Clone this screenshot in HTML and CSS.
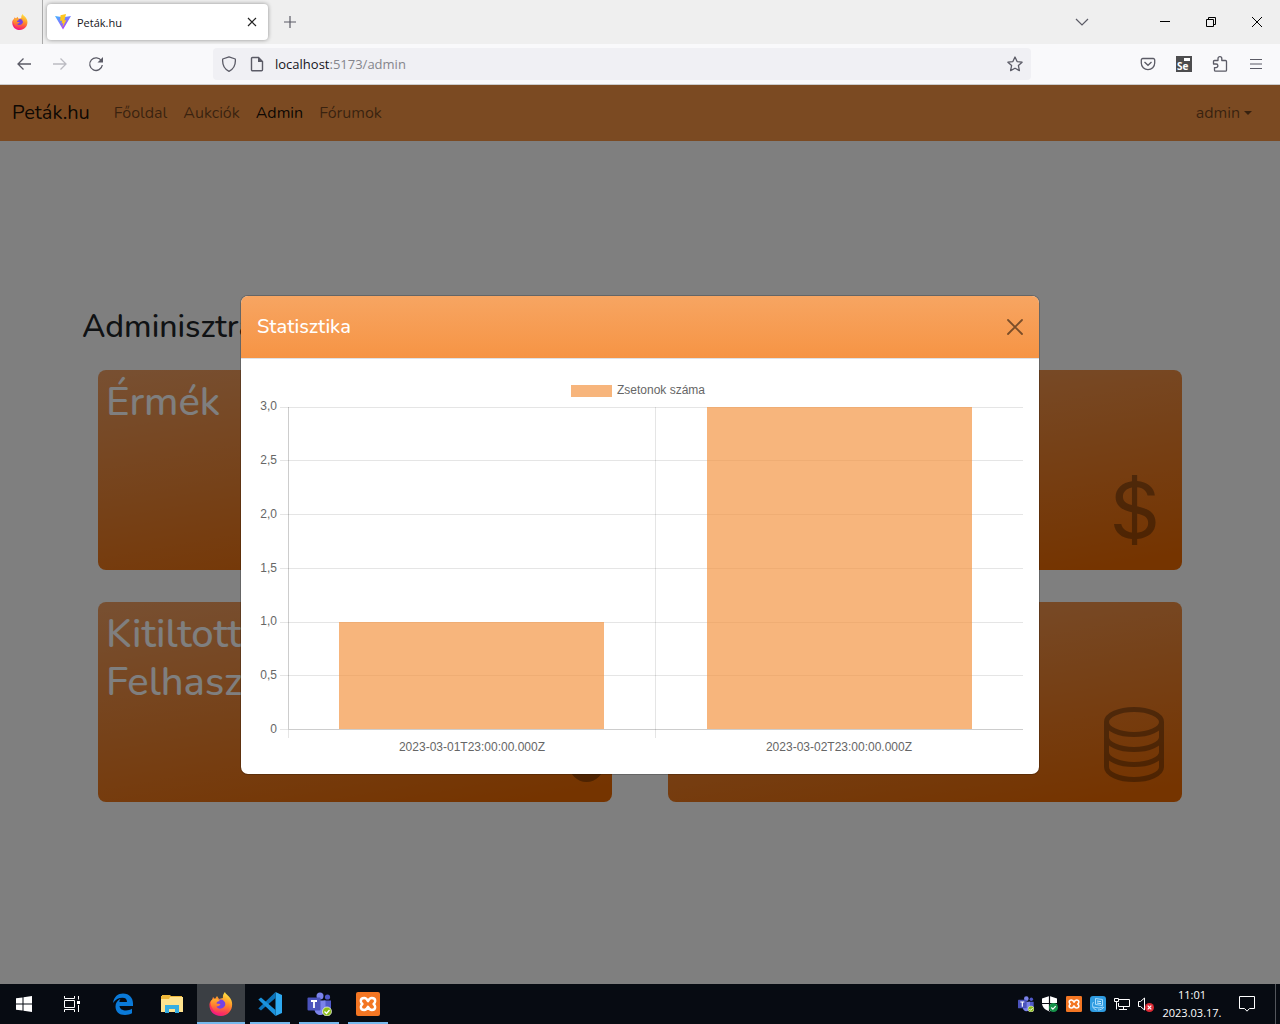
FILE: index.html
```html
<!DOCTYPE html>
<html lang="hu">
<head>
<meta charset="utf-8">
<meta name="viewport" content="width=device-width, initial-scale=1">
<title>Peták.hu</title>
<link rel="stylesheet" href="styles.css">
</head>
<body>
<svg class="defs" aria-hidden="true">
  <defs>
    <linearGradient id="ff-fire" x1="0.8" y1="0" x2="0.3" y2="1">
      <stop offset="0" stop-color="#fff04a"/><stop offset="0.35" stop-color="#ffa02a"/><stop offset="0.7" stop-color="#ff4242"/><stop offset="1" stop-color="#f0148c"/>
    </linearGradient>
    <linearGradient id="ff-swirl" x1="0.5" y1="0" x2="0.4" y2="1">
      <stop offset="0" stop-color="#ffb52e"/><stop offset="0.5" stop-color="#ff7a30"/><stop offset="1" stop-color="#f8246e"/>
    </linearGradient>
    <linearGradient id="vite-body" x1="0" y1="0" x2="0.6" y2="1">
      <stop offset="0" stop-color="#41b8ff"/><stop offset="1" stop-color="#b43cff"/>
    </linearGradient>
    <symbol id="firefox" viewBox="0 0 24 24">
      <path d="M3 8l1-3 2 2 2-3 2 3 4-1c-.5-2 .5-4.500 2-6 .5 2.500 5 4 6.500 8.500C25 16 20 24 12 24S0 18.500 .5 12C.7 10 1.500 9 3 8z" fill="url(#ff-fire)"/>
      <circle cx="11.500" cy="12.500" r="5" fill="#7542e5"/>
      <path d="M2 9c2-3 6-3 9 0-2 .3-3.500 1-3.500 2.500 1.500.5 3 0 4 .8-1 1.700-2.500 2.400-4 2.200 1 2.500 5 3 7.500 .5s2-5-.5-6.500c5 0 7 5 5 9-3 6-12 6-15.500 0C2 14.500 1 11.500 2 9z" fill="url(#ff-swirl)"/>
    </symbol>
    <symbol id="teams" viewBox="0 0 24 24">
      <circle cx="12.500" cy="4" r="3.500" fill="#7b83eb"/><circle cx="20" cy="5" r="2.600" fill="#5059c9"/>
      <path d="M16 8.500h7.500V16c0 3-2 4.500-5 4.500z" fill="#5059c9"/>
      <path d="M7 8.500h11V17c0 4-2.500 6-5.500 6S7 20.500 7 17z" fill="#7b83eb"/>
      <rect y="5.500" width="13" height="13" rx="1" fill="#4b53bc"/>
      <path d="M3.500 9h6M6.500 9v7" stroke="#fff" stroke-width="1.800"/>
      <circle cx="19.500" cy="19.500" r="4.500" fill="#8cbd18" stroke="#fff" stroke-width=".7"/>
      <path d="M17 19.500l2 2 3-3.500" fill="none" stroke="#fff" stroke-width="1.300"/>
    </symbol>
    <symbol id="xampp" viewBox="0 0 24 24">
      <rect width="24" height="24" rx="2" fill="#f37623"/>
      <path d="M12 9.200C11 7 10 6 8.200 6 6 6 4.800 7.200 4.800 9S6 11.500 6.500 12c-.5.500-1.700 1.200-1.700 3s1.200 3 3.400 3c1.800 0 2.800-1 3.800-3.200 1 2.200 2 3.200 3.800 3.200 2.200 0 3.400-1.200 3.400-3s-1.200-2.500-1.700-3c.5-.5 1.700-1.200 1.700-3s-1.200-3-3.400-3C14 6 13 7 12 9.200z" fill="none" stroke="#fff" stroke-width="2.400" stroke-linejoin="round"/>
    </symbol>
  </defs>
</svg>

<header class="browser">
  <div class="tab-strip">
    <div class="firefox-view"><svg width="16" height="16"><use href="#firefox"/></svg></div>
    <div class="tab">
      <svg width="16" height="16" viewBox="0 0 16 16"><path d="M0 2l8 13.500L16 2 8 3.300z" fill="url(#vite-body)"/><path d="M11 0L5.500 1.200 5.200 7l2-.4L6.600 9.500l1.600-.4-.8 4.400 4-7.500-2 .4z" fill="#ffc71f"/></svg>
      <span class="tab-title">Peták.hu</span>
      <button class="icon-button" aria-label="Lap bezárása"><svg width="16" height="16" viewBox="0 0 16 16"><path d="M4 4l8 8M12 4l-8 8" stroke="#222" stroke-width="1.200"/></svg></button>
    </div>
    <button class="icon-button new-tab" aria-label="Új lap"><svg width="16" height="16" viewBox="0 0 16 16"><path d="M8 2v12M2 8h12" stroke="#5b5b66" stroke-width="1.200"/></svg></button>
    <button class="icon-button all-tabs" aria-label="Összes lap"><svg width="16" height="16" viewBox="0 0 16 16"><path d="M2 5l6 6 6-6" fill="none" stroke="#5b5b66" stroke-width="1.200"/></svg></button>
    <div class="window-controls">
      <button class="icon-button" aria-label="Kis méret"><svg width="12" height="12" viewBox="0 0 12 12"><path d="M1 5.500h10" stroke="#000"/></svg></button>
      <button class="icon-button" aria-label="Előző méret"><svg width="12" height="12" viewBox="0 0 12 12"><path d="M1.500 3.500h7v7h-7zM3.500 3.500v-2h7v7h-2" fill="none" stroke="#000"/></svg></button>
      <button class="icon-button" aria-label="Bezárás"><svg width="12" height="12" viewBox="0 0 12 12"><path d="M1 1l10 10M11 1L1 11" stroke="#000"/></svg></button>
    </div>
  </div>
  <div class="toolbar">
    <div class="toolbar-nav">
      <button class="icon-button" aria-label="Vissza"><svg width="16" height="16" viewBox="0 0 16 16"><path d="M15 8H2M7.500 2.500L2 8l5.500 5.500" fill="none" stroke="#5b5b66" stroke-width="1.300"/></svg></button>
      <button class="icon-button" aria-label="Előre" disabled><svg width="16" height="16" viewBox="0 0 16 16"><path d="M1 8h13M8.500 2.500L14 8l-5.500 5.500" fill="none" stroke="#bcbcc2" stroke-width="1.300"/></svg></button>
      <button class="icon-button" aria-label="Frissítés"><svg width="16" height="16" viewBox="0 0 16 16"><path d="M13.500 5A6.300 6.300 0 1 0 14.300 9" fill="none" stroke="#5b5b66" stroke-width="1.300"/><path d="M15 1v5.500H9.500z" fill="#5b5b66"/></svg></button>
    </div>
    <div class="address">
      <svg width="16" height="16" viewBox="0 0 16 16"><path d="M8 .8L14.300 3c.5 5.500-1.300 10-6.300 12.300C3 13 1.200 8.500 1.700 3z" fill="none" stroke="#5b5b66" stroke-width="1.300" stroke-linejoin="round"/></svg>
      <svg width="16" height="16" viewBox="0 0 16 16"><path d="M3.500 1.500h6l4 4v8.200a1 1 0 0 1-1 1h-9a1 1 0 0 1-1-1V2.500a1 1 0 0 1 1-1z" fill="none" stroke="#5b5b66" stroke-width="1.400"/><path d="M9 1l5 5H9z" fill="#5b5b66"/></svg>
      <span class="url"><span class="host">localhost</span>:5173/admin</span>
      <button class="icon-button" aria-label="Könyvjelző"><svg width="16" height="16" viewBox="0 0 16 16"><path d="M8 1l2.100 4.600 5 .6-3.700 3.400 1 5L8 12.200 3.600 14.600l1-5L.9 6.200l5-.6z" fill="none" stroke="#5b5b66" stroke-width="1.300" stroke-linejoin="round"/></svg></button>
    </div>
    <div class="toolbar-actions">
      <button class="icon-button" aria-label="Pocket"><svg width="16" height="16" viewBox="0 0 16 16"><path d="M2.800 2.500h10.400a1.500 1.500 0 0 1 1.500 1.500v3a6.700 6.700 0 0 1-13.400 0V4a1.500 1.500 0 0 1 1.500-1.500z" fill="none" stroke="#5b5b66" stroke-width="1.300"/><path d="M4.500 6L8 9.300 11.500 6" fill="none" stroke="#5b5b66" stroke-width="1.300"/></svg></button>
      <button class="icon-button" aria-label="Selenium IDE"><svg width="16" height="16" viewBox="0 0 16 16"><path d="M0 0h16v16H0z" fill="#4d4d4f"/><path d="M8 2h6v3H8z" fill="#fff"/><text x="1" y="14" class="selenium">Se</text></svg></button>
      <button class="icon-button" aria-label="Kiegészítők"><svg width="16" height="16" viewBox="0 0 16 16"><path d="M2.500 4.500H6V2.600a1.900 1.900 0 0 1 3.800 0v1.900h3.700a1 1 0 0 1 1 1v8.700a1 1 0 0 1-1 1h-10a1 1 0 0 1-1-1v-2.600h1.600a1.800 1.800 0 0 0 0-3.600H1.500V5.500a1 1 0 0 1 1-1z" fill="none" stroke="#5b5b66" stroke-width="1.300" stroke-linejoin="round"/></svg></button>
      <button class="icon-button" aria-label="Menü"><svg width="16" height="16" viewBox="0 0 16 16"><path d="M2 3.500h12M2 8h12M2 12.500h12" stroke="#5b5b66" stroke-width="1.200"/></svg></button>
    </div>
  </div>
</header>

<div class="viewport">
  <nav class="navbar">
    <a class="brand" href="#">Peták.hu</a>
    <a class="nav-link" href="#">Főoldal</a>
    <a class="nav-link" href="#">Aukciók</a>
    <a class="nav-link active" href="#">Admin</a>
    <a class="nav-link" href="#">Fórumok</a>
    <button class="user-menu">admin<span class="caret"></span></button>
  </nav>
  <main class="content">
    <h2 class="page-title">Adminisztráció</h2>
    <div class="cards">
      <a class="card" href="#"><span class="card-title">Érmék</span></a>
      <a class="card" href="#" aria-label="Statisztika">
        <svg class="card-icon" viewBox="0 0 16 16"><path d="M4 10.781c.148 1.667 1.513 2.850 3.591 3.003V15h1.043v-1.216c2.270-.179 3.678-1.438 3.678-3.300 0-1.590-.947-2.510-2.956-3.028l-.722-.187V3.467c1.122.110 1.879.714 2.070 1.616h1.470c-.166-1.600-1.540-2.748-3.540-2.875V1H7.591v1.233c-1.939.230-3.270 1.472-3.270 3.156 0 1.454.966 2.483 2.661 2.917l.610.162v4.031c-1.149-.170-1.940-.800-2.131-1.718H4zm3.391-3.836c-1.043-.263-1.600-.825-1.600-1.616 0-.944.704-1.641 1.800-1.828v3.495l-.200-.050zm1.591 1.872c1.287.323 1.852.859 1.852 1.769 0 1.097-.826 1.828-2.200 1.939V8.730l.348.086z"/></svg>
      </a>
      <a class="card" href="#"><span class="card-title">Kitiltott<br>Felhasználók</span>
        <svg class="card-icon" viewBox="0 0 16 16"><circle cx="12.500" cy="12.500" r="3.500"/></svg>
      </a>
      <a class="card" href="#" aria-label="Adatbázis">
        <svg class="card-icon" viewBox="0 0 16 16"><path d="M2.500 4C2.500 2.600 5 1.500 8 1.500s5.500 1.100 5.500 2.500S11 6.500 8 6.500 2.500 5.400 2.500 4v9c0 1.400 2.500 2.500 5.500 2.500s5.500-1.100 5.500-2.500V4M2.500 7c0 1.400 2.500 2.500 5.500 2.500s5.500-1.100 5.500-2.500M2.500 10c0 1.400 2.500 2.500 5.500 2.500s5.500-1.100 5.500-2.500" fill="none" stroke="#000"/></svg>
      </a>
    </div>
  </main>

  <div class="backdrop">
    <section class="modal" role="dialog" aria-labelledby="modal-title">
      <header class="modal-header">
        <h5 class="modal-title" id="modal-title">Statisztika</h5>
        <button class="icon-button modal-close" aria-label="Bezárás"><svg width="16" height="16" viewBox="0 0 16 16"><path d="M1 1l14 14M15 1L1 15" stroke="#000" stroke-width="1.800" stroke-linecap="round"/></svg></button>
      </header>
      <div class="modal-body">
        <svg class="chart" viewBox="0 0 766 383" role="img" aria-label="Zsetonok száma">
          <rect class="bar" x="314" y="10" width="41" height="12"/>
          <text x="360" y="19">Zsetonok száma</text>
          <path class="grid" d="M23 32.500h743M23 85.500h743M23 139.500h743M23 193.500h743M23 247.500h743M23 300.500h743M23 354.500h743M31.500 32v331M398.500 32v331"/>
          <path class="grid" d="M31.500 32v322M32 354.500h734"/>
          <rect class="bar" x="82" y="247" width="265" height="107"/>
          <rect class="bar" x="450" y="32" width="265" height="322"/>
          <g text-anchor="end">
            <text x="20" y="35">3,0</text><text x="20" y="89">2,5</text><text x="20" y="143">2,0</text><text x="20" y="197">1,5</text><text x="20" y="250">1,0</text><text x="20" y="304">0,5</text><text x="20" y="358">0</text>
          </g>
          <g text-anchor="middle">
            <text x="215" y="376">2023-03-01T23:00:00.000Z</text><text x="582" y="376">2023-03-02T23:00:00.000Z</text>
          </g>
        </svg>
      </div>
    </section>
  </div>
</div>

<footer class="taskbar">
  <button class="task" aria-label="Start"><svg width="16" height="16" viewBox="0 0 16 16"><path d="M0 2.300L6.500 1.400v6.100H0zM7.500 1.200L16 0v7.500H7.500zM0 8.500h6.500v6.100L0 13.700zM7.500 8.500H16V16l-8.500-1.200z" fill="#fff"/></svg></button>
  <button class="task" aria-label="Feladatnézet"><svg width="16" height="16" viewBox="0 0 16 16"><path d="M.5 0v2.500h10V0M.5 16v-2.500h10V16M.5 4.500h10v7H.5zM14.500 0v3.500M14.500 9v7" fill="none" stroke="#fff"/><path d="M13 5h3v3h-3z" fill="#fff"/></svg></button>
  <div class="pinned">
    <button class="task" aria-label="Edge"><svg width="22" height="22" viewBox="0 0 22 22"><path d="M1 10C2 3.500 6 .5 11 .5c6.500 0 10 4.500 10 10V13H7.500c.3 3 3 4.500 6.500 4.500 2.200 0 4.200-.6 6-1.700v4.500c-2 1.100-4.200 1.700-7 1.700-6 0-9.500-3.500-9.500-8.500 0-3.500 1.800-6 5-7.700C7.600 7 7.500 8.200 7.400 9H15c0-2.900-1.500-4.300-4.500-4.300C6.500 4.700 3.500 6.500 1 10z" fill="#0a7ad9"/></svg></button>
    <button class="task" aria-label="Fájlkezelő"><svg width="22" height="20" viewBox="0 0 22 20"><path d="M0 2h1V1h8l1 1h11v5H0z" fill="#f0b83a"/><path d="M0 5h8l1-2h13v15H0z" fill="#ffe38f"/><path d="M4 19v-8h14v8h-4v-4H8v4z" fill="#37aee2"/></svg></button>
    <button class="task current" aria-label="Firefox"><svg width="24" height="24"><use href="#firefox"/></svg></button>
    <button class="task running" aria-label="Visual Studio Code"><svg width="24" height="24" viewBox="0 0 24 24"><path d="M17.500 0L24 3v18l-6.500 3z" fill="#2ea9f0"/><path d="M17.500 0v6L3 18.500 .3 16.500z" fill="#0b72b8"/><path d="M17.500 24v-6L3 5.500.3 7.500z" fill="#1b92dc"/></svg></button>
    <button class="task running" aria-label="Teams"><svg width="25" height="24"><use href="#teams"/></svg></button>
    <button class="task running" aria-label="XAMPP"><svg width="24" height="24"><use href="#xampp"/></svg></button>
  </div>
  <div class="tray">
    <svg width="16" height="16"><use href="#teams"/></svg>
    <svg width="16" height="16" viewBox="0 0 16 16"><path d="M7.500 0L15 2.500V7c0 4-3 7-7.500 8.500C3 14 0 11 0 7V2.500z" fill="#fff"/><path d="M7.500 0v15M0 7.500h15" stroke="#0a0d14" stroke-width="1.200"/><circle cx="11.500" cy="11.500" r="4.500" fill="#16924a"/><path d="M9.300 11.500l1.600 1.600 2.800-3" fill="none" stroke="#fff" stroke-width="1.200"/></svg>
    <svg width="16" height="16"><use href="#xampp"/></svg>
    <svg width="16" height="16" viewBox="0 0 16 16"><rect width="16" height="16" rx="3" fill="#2e9be0"/><path d="M5.500 2.500l7 1v6l-7-1zM3.500 6c-2 3-1 7 3 8M14 11c-1 2-4 3-6 3M3 11l6 1 4-1" fill="none" stroke="#a8dcff"/><path d="M7 5l4 .6M7 7l4 .6" stroke="#d4eeff"/></svg>
    <svg width="16" height="16" viewBox="0 0 16 16"><path d="M5 3.500h10.500v7h-11V7M5 13.500h8M9.500 10.500v3M2.500 6v7.500" fill="none" stroke="#fff"/><path d="M.5 2.500h4v3h-4z" fill="none" stroke="#fff"/></svg>
    <svg width="16" height="16" viewBox="0 0 16 16"><path d="M.5 5.500h2l4-3.500v12l-4-3.500h-2z" fill="none" stroke="#fff"/><circle cx="11.500" cy="11.500" r="4.500" fill="#dc2b35"/><path d="M9.700 9.700l3.600 3.600M13.300 9.700l-3.600 3.600" stroke="#fff" stroke-width="1.200"/></svg>
    <div class="clock"><time>11:01</time><time>2023.03.17.</time></div>
    <svg class="notifications" width="16" height="16" viewBox="0 0 16 16"><path d="M.5.500h15v12H10.500L8 15.200 5.500 12.500h-5z" fill="none" stroke="#fff"/></svg>
    <span class="show-desktop"></span>
  </div>
</footer>
</body>
</html>
```
FILE: styles.css
```css
* { box-sizing: border-box; }
body {
  margin: 0;
  min-height: 100vh;
  display: flex;
  flex-direction: column;
  font-family: Nunito, "Open Sans", sans-serif;
  font-size: 16px;
  line-height: 24px;
}
button { font: inherit; color: inherit; border: 0; padding: 0; background: none; }
a { color: inherit; text-decoration: none; }
svg { display: block; flex: none; }
.defs { position: absolute; width: 0; height: 0; }
.icon-button { display: flex; align-items: center; justify-content: center; }

/* Browser window */
.browser { font-family: "Segoe UI", "Open Sans", sans-serif; border-bottom: 1px solid #ccc; }
.tab-strip { display: flex; align-items: center; height: 44px; background: #efefef; }
.firefox-view { display: flex; align-items: center; justify-content: center; width: 43px; padding-right: 2px; height: 44px; border-right: 1px solid #aaa; }
.tab {
  display: flex;
  align-items: center;
  gap: 6px;
  width: 221px;
  height: 36px;
  margin-left: 4px;
  padding: 0 8px;
  border-radius: 4px;
  background: #fff;
  box-shadow: 0 0 4px rgba(0, 0, 0, .4);
}
.tab-title { flex: 1; padding-top: 2px; font-size: 11px; color: #15141a; }
.new-tab { margin-left: 14px; }
.all-tabs { margin-left: auto; margin-right: 52px; }
.window-controls { display: flex; }
.window-controls .icon-button { width: 46px; height: 44px; }
.toolbar { display: flex; align-items: center; height: 40px; padding: 0 16px; background: #f9f9fb; }
.toolbar-nav, .toolbar-actions { display: flex; gap: 20px; }
.toolbar-nav { margin-right: 109px; }
.toolbar-actions { margin-left: 109px; }
.address {
  display: flex;
  flex: 1;
  align-items: center;
  gap: 12px;
  height: 32px;
  padding: 0 8px;
  border-radius: 4px;
  background: #f0f0f4;
}
.url { flex: 1; margin-left: -2px; font-size: 13px; color: #85858c; }
.host { color: #15141a; }
.selenium { font: bold 10px "Open Sans", sans-serif; fill: #fff; }

/* Site */
.viewport { position: relative; flex: 1; display: flex; flex-direction: column; background: #fff; }
.navbar { display: flex; align-items: center; min-height: 56px; padding: 8px 12px; background: #f69444; color: rgba(0, 0, 0, .55); }
.brand { margin-right: 16px; font-size: 20px; line-height: 30px; color: rgba(0, 0, 0, .9); }
.nav-link { padding: 8px; }
.nav-link.active { color: rgba(0, 0, 0, .9); }
.user-menu { display: flex; align-items: center; gap: 4px; margin-left: auto; padding: 8px 16px; }
.caret { border: 4px solid transparent; border-top-color: currentColor; border-bottom: 0; }
.content { flex: 1; display: flex; flex-direction: column; justify-content: center; width: 100%; max-width: 1140px; margin: 0 auto; padding: 0 12px; }
.page-title { margin: 0 0 24px; font-size: 32px; font-weight: 500; line-height: 38px; color: #212529; }
.cards { display: grid; grid-template-columns: 1fr 1fr; gap: 32px 56px; padding: 0 16px 15px; }
.card {
  display: flex;
  flex-direction: column;
  justify-content: space-between;
  height: 200px;
  padding: 8px 8px 20px;
  border-radius: 8px;
  background: linear-gradient(170deg, #f0a064, #ea6800 95%);
  color: #fff;
}
.card-title { font-size: 40px; font-weight: 500; line-height: 48px; height: 48px; }
.card-icon { width: 80px; height: 80px; margin-top: auto; margin-left: auto; opacity: .33; }

/* Dialog */
.backdrop { position: absolute; inset: 0; display: flex; align-items: center; justify-content: center; background: rgba(0, 0, 0, .5); }
.modal { width: 800px; max-width: 94%; border: 1px solid rgba(0, 0, 0, .2); border-radius: 8px; background: #fff; background-clip: padding-box; overflow: hidden; }
.modal-header { display: flex; align-items: center; justify-content: space-between; padding: 16px; border-bottom: 1px solid #dee2e6; background: linear-gradient(#f7a562, #f69444); color: #fff; }
.modal-title { margin: 0; font-size: 20px; font-weight: 500; line-height: 30px; }
.modal-close { opacity: .5; }
.modal-body { padding: 16px; }
.chart { width: 100%; height: auto; font-family: "Liberation Sans", Arial, sans-serif; font-size: 12px; fill: #666; }
.bar { fill: rgba(244, 149, 69, .7); }
.grid { fill: none; stroke: rgba(0, 0, 0, .1); }

/* Taskbar */
.taskbar { display: flex; align-items: center; height: 40px; background: #070b12; color: #fff; font-family: "Segoe UI", "Open Sans", sans-serif; }
.task { display: flex; align-items: center; justify-content: center; width: 48px; height: 40px; }
.pinned { display: flex; gap: 1px; margin-left: 3px; }
.task.current { background: #3b3f44; box-shadow: inset 0 -2px #76b9ed; }
.task.running { background: linear-gradient(#76b9ed, #76b9ed) center bottom / 40px 2px no-repeat; }
.tray { display: flex; align-items: center; gap: 8px; margin-left: auto; }
.clock { display: flex; flex-direction: column; align-items: center; width: 60px; font-size: 11px; line-height: 18px; }
.notifications { margin: 0 12px 0 9px; }
.show-desktop { width: 5px; height: 40px; border-left: 1px solid #53565c; }
```
